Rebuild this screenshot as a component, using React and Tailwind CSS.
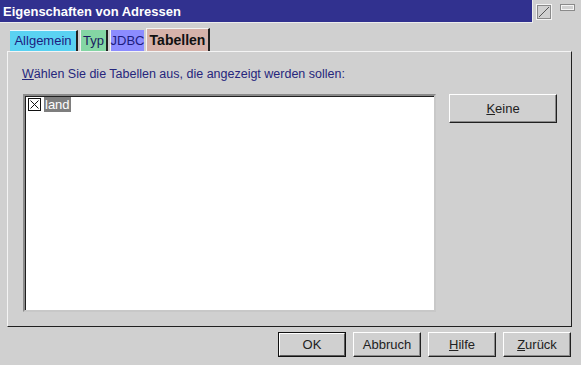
export default function App() {
  const font = { fontFamily: '"Liberation Sans", Arial, sans-serif' };
  const btn =
    "flex items-center justify-center h-[25px] w-[68px] text-[13px] text-[#222] border border-t-white border-l-white border-r-[#202020] border-b-[#202020] shadow-[inset_-1px_-1px_0_#8a8a8a]";
  return (
    <div className="w-[581px] h-[365px] bg-[#d0d0d0] overflow-hidden flex flex-col" style={font}>
      {/* title row */}
      <div className="flex h-[23px] shrink-0">
        <div className="w-[533px] h-[23px] bg-[#31318f] border-r border-b border-[#ececec] flex items-center pl-[3px]">
          <span className="text-white font-bold text-[13px] leading-none">Eigenschaften von Adressen</span>
        </div>
        <div className="flex items-start pt-[4px] pl-[3px] gap-[8px]">
          <svg width="16" height="16" viewBox="0 0 16 16">
            <rect x="0.5" y="0.5" width="15" height="15" fill="none" stroke="#f4f4f4" />
            <rect x="1.5" y="1.5" width="13" height="13" fill="none" stroke="#8a8a8a" />
            <line x1="3" y1="13" x2="13" y2="3" stroke="#555" strokeWidth="1" />
          </svg>
          <svg width="15" height="7" viewBox="0 0 15 7">
            <rect x="0.5" y="0.5" width="14" height="6" fill="none" stroke="#8a8a8a" />
            <rect x="1.5" y="1.5" width="12" height="4" fill="none" stroke="#f4f4f4" />
          </svg>
        </div>
      </div>

      {/* tabs */}
      <div className="flex items-end h-[28px] pl-[10px] shrink-0">
        <div className="h-[21px] w-[68px] bg-[#5ad2f2] border-r-2 border-r-[#202020] border-t border-t-[#e8f8ff] flex items-center justify-center text-[13px] text-[#1c1c80]">Allgemein</div>
        <div className="ml-[2px] h-[21px] w-[28px] bg-[#84d6a4] border-l border-l-[#f0f0f0] border-r-2 border-r-[#202020] flex items-center justify-center text-[13px] text-[#1c1c60]">Typ</div>
        <div className="ml-[2px] h-[21px] w-[34px] bg-[#8c8cff] border-l border-l-[#f0f0f0] flex items-center justify-center text-[13px] text-[#1c1c80]">JDBC</div>
        <div className="ml-[2px] h-[23px] w-[64px] bg-[#d6b2aa] border-l border-t border-l-[#f4f4f4] border-t-[#f4f4f4] border-r-2 border-r-[#202020] flex items-center justify-center text-[14px] font-bold text-[#111]">Tabellen</div>
      </div>

      {/* panel */}
      <div className="ml-[7px] w-[565px] h-[276px] shrink-0 border border-t-[#f4f4f4] border-l-[#f4f4f4] border-r-[#202020] border-b-[#202020] flex flex-col">
        <div className="mt-[14px] ml-[14px] text-[12.5px] leading-[16px] text-[#26267c]">
          <span className="underline">W</span>ählen Sie die Tabellen aus, die angezeigt werden sollen:
        </div>
        <div className="flex mt-[12px] ml-[15px] gap-[13px]">
          <div className="w-[413px] h-[218px] bg-white border-2 border-t-[#8a8a8a] border-l-[#8a8a8a] border-r-[#c8c8c8] border-b-[#c8c8c8] shadow-[inset_1px_1px_0_#202020]">
            <div className="flex items-center mt-[1px] ml-[3px]">
              <svg width="13" height="13" viewBox="0 0 13 13">
                <rect x="0.5" y="0.5" width="12" height="12" fill="#fff" stroke="#111" />
                <line x1="2.5" y1="2.5" x2="10.5" y2="10.5" stroke="#111" />
                <line x1="10.5" y1="2.5" x2="2.5" y2="10.5" stroke="#111" />
              </svg>
              <span className="ml-[3px] bg-[#7e7e7e] text-white text-[13px] leading-[15px] px-[1px]">land</span>
            </div>
          </div>
          <div className="flex items-center justify-center h-[29px] w-[108px] text-[13px] text-[#222] border border-t-white border-l-white border-r-[#202020] border-b-[#202020] shadow-[inset_-1px_-1px_0_#8a8a8a]">
            <span><span className="underline">K</span>eine</span>
          </div>
        </div>
      </div>

      {/* buttons */}
      <div className="flex justify-end gap-[7px] pr-[10px] mt-[5px]">
        <div className="h-[25px] w-[68px] border border-[#111] flex">
          <div className="flex-1 flex items-center justify-center text-[13px] text-[#222] border border-t-white border-l-white border-r-[#5a5a5a] border-b-[#5a5a5a]">OK</div>
        </div>
        <div className={btn}>Abbruch</div>
        <div className={btn}><span><span className="underline">H</span>ilfe</span></div>
        <div className={btn}><span><span className="underline">Z</span>urück</span></div>
      </div>
    </div>
  );
}
